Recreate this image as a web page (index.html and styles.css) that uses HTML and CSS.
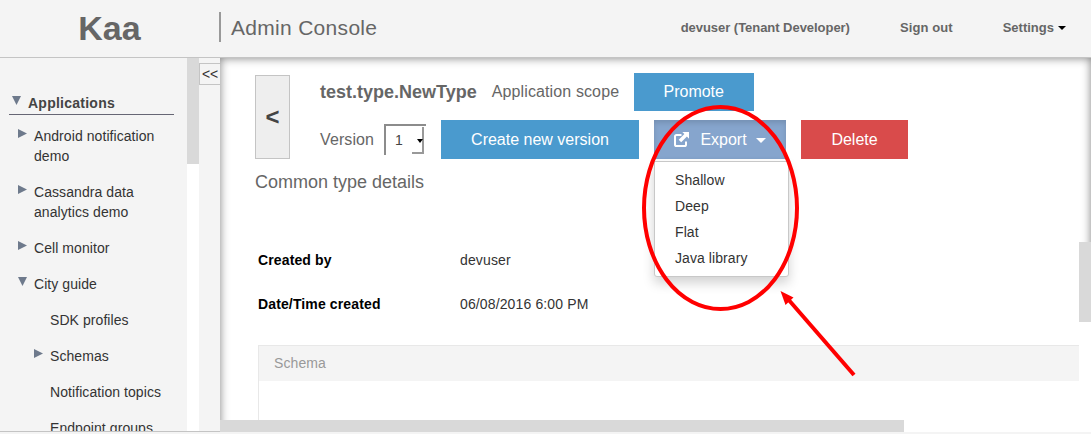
FILE: index.html
```html
<!DOCTYPE html>
<html lang="en">
<head>
<meta charset="utf-8">
<title>Kaa Admin Console</title>
<link rel="stylesheet" href="styles.css">
</head>
<body>
<header class="header">
  <div class="logo">Kaa</div>
  <div class="console-title">Admin Console</div>
  <nav class="user-nav">
    <span class="user">devuser (Tenant Developer)</span>
    <span class="sign-out">Sign out</span>
    <span class="settings">Settings<i class="caret"></i></span>
  </nav>
</header>
<div class="body">
  <aside class="sidebar">
    <div class="tree">
      <div class="tree-heading"><i class="arrow down"></i>Applications</div>
      <div class="item"><i class="arrow right"></i><span>Android notification demo</span></div>
      <div class="item"><i class="arrow right"></i><span>Cassandra data analytics demo</span></div>
      <div class="item"><i class="arrow right"></i><span>Cell monitor</span></div>
      <div class="item"><i class="arrow down"></i><span>City guide</span></div>
      <div class="item child"><i class="arrow"></i><span>SDK profiles</span></div>
      <div class="item child"><i class="arrow right"></i><span>Schemas</span></div>
      <div class="item child"><i class="arrow"></i><span>Notification topics</span></div>
      <div class="item child"><i class="arrow"></i><span>Endpoint groups</span></div>
    </div>
    <div class="side-scroll"><div class="side-thumb"></div></div>
    <div class="collapse-col"><div class="collapse">&lt;&lt;</div></div>
  </aside>
  <main class="main">
    <div class="content">
      <div class="top">
        <div class="back">&lt;</div>
        <div class="rows">
          <div class="row first">
            <span class="type-name">test.type.NewType</span>
            <span class="scope">Application scope</span>
            <span class="btn promote">Promote</span>
          </div>
          <div class="row">
            <span class="version">Version</span>
            <span class="select">1<span class="select-button"><i class="caret select-caret"></i></span></span>
            <span class="btn create">Create new version</span>
            <div class="export-wrap">
              <span class="btn export">
                <svg class="export-icon" width="15" height="15" viewBox="0 0 15 15"><path d="M7.5 3H2.6Q1 3 1 4.6V12.4Q1 14 2.6 14H10.4Q12 14 12 12.4V9.5" fill="none" stroke="#fff" stroke-width="2"/><path d="M8.3 0H15V6.7L12.9 4.6L7.2 10.3L4.7 7.8L10.4 2.1Z" fill="#fff"/></svg>
                <span>Export</span>
                <i class="caret export-caret"></i>
              </span>
              <div class="menu">
                <div>Shallow</div>
                <div>Deep</div>
                <div>Flat</div>
                <div>Java library</div>
              </div>
            </div>
            <span class="btn delete">Delete</span>
          </div>
        </div>
      </div>
      <div class="subtitle">Common type details</div>
      <div class="details">
        <b>Created by</b><span>devuser</span>
        <b>Date/Time created</b><span>06/08/2016 6:00 PM</span>
      </div>
      <div class="schema"><div class="schema-head">Schema</div></div>
    </div>
    <div class="v-scroll"><div class="v-thumb"></div></div>
    <div class="h-scroll"><div class="h-thumb"></div></div>
  </main>
</div>
<svg class="annotation" width="1091" height="434" viewBox="0 0 1091 434">
  <ellipse cx="720.5" cy="208" rx="76.5" ry="101" fill="none" stroke="#f00" stroke-width="4"/>
  <path d="M787.5 298.5L854 375" stroke="#f00" stroke-width="4"/>
  <path d="M780.5 291L793.5 297.5L785.5 305Z" fill="#f00"/>
</svg>
</body>
</html>
```
FILE: styles.css
```css
* { box-sizing: border-box; }
body {
  margin: 0;
  width: 1091px;
  height: 434px;
  overflow: hidden;
  background: #f4f4f4;
  color: #333;
  font: 14px/20px "Liberation Sans", Arial, sans-serif;
}
.header {
  display: flex;
  align-items: center;
  height: 58px;
  border-bottom: 1px solid #c4c4c4;
  color: #666;
}
.logo {
  width: 219px;
  text-align: center;
  font-size: 34px;
  font-weight: bold;
  line-height: 40px;
  padding-bottom: 2px;
}
.console-title {
  height: 30px;
  margin-top: -3px;
  padding-left: 10px;
  border-left: 2px solid #999;
  font-size: 21px;
  line-height: 32px;
  letter-spacing: 0.3px;
}
.user-nav {
  display: flex;
  gap: 50px;
  margin-left: auto;
  padding-right: 25px;
  font-size: 13px;
  font-weight: bold;
  padding-bottom: 2px;
}
.user { letter-spacing: -0.04px; }
.sign-out { letter-spacing: 0.1px; }
.settings { display: flex; align-items: center; }
.caret {
  border: 4px solid transparent;
  border-top-color: #000;
  border-bottom: 0;
}
.settings .caret { margin: 1px 0 0 4px; }
.body { display: flex; height: 374px; }
.sidebar {
  display: flex;
  width: 220px;
  height: 374px;
  border-bottom: 1px solid #c4c4c4;
}
.tree { width: 187px; padding: 35px 13px 0 9px; overflow: hidden; }
.tree-heading {
  display: flex;
  height: 22px;
  padding-left: 3px;
  border-bottom: 1px solid #666674;
  font-weight: bold;
  letter-spacing: 0.25px;
  color: #444;
}
.item { display: flex; padding: 8px 0 8px 9px; letter-spacing: 0.07px; }
.item:nth-child(2) { margin-top: 3px; }
.item.child { padding-left: 25px; }
.item.child span { white-space: nowrap; }
.arrow { flex: none; width: 9px; height: 9px; margin: 3px 7px 0 0; }
.arrow.right { background: #6e7a8c; clip-path: polygon(0 0, 100% 50%, 0 100%); }
.arrow.down { background: #6e7a8c; clip-path: polygon(0 0, 100% 0, 50% 100%); }
.side-scroll { width: 12px; background: #fff; }
.side-thumb { height: 106px; background: #d9d9d9; }
.collapse-col { width: 21px; padding-top: 5px; }
.collapse {
  height: 22px;
  border: 1px solid #c4c4c4;
  border-right: 0;
  padding-left: 2px;
  letter-spacing: -0.1px;
}
.main {
  display: grid;
  grid-template-columns: 859px 12px;
  grid-template-rows: 362px 12px;
  width: 871px;
  height: 374px;
  background: #fff;
  box-shadow: inset 0 0 10px rgba(0, 0, 0, 0.5);
}
.content { padding: 15px 0 0 35px; overflow: hidden; }
.top { display: flex; gap: 30px; }
.back {
  width: 35px;
  height: 84px;
  margin-top: 2px;
  border: 1px solid #c4c4c4;
  background: #eee;
  text-align: center;
  font-size: 24px;
  font-weight: bold;
  line-height: 82px;
  color: #444;
}
.rows { color: #666; font-size: 16px; }
.row { display: flex; align-items: center; height: 39px; gap: 15px; }
.row.first { height: 38px; margin-bottom: 9px; }
.type-name { font-size: 18px; font-weight: bold; }
.scope { width: 127px; letter-spacing: 0.12px; white-space: nowrap; }
.btn {
  display: flex;
  align-items: center;
  justify-content: center;
  height: 39px;
  color: #fff;
  background: #4a9ace;
}
.promote { width: 120px; height: 38px; }
.create { width: 198px; }
.delete { width: 107px; background: #d94b4b; }
.version { width: 54px; margin-right: -5px; letter-spacing: 0.1px; }
.select {
  display: flex;
  justify-content: space-between;
  width: 42px;
  height: 31px;
  padding: 1px 2px 1px 9px;
  border-top: 2px solid #8c8c8c;
  border-left: 2px solid #8c8c8c;
  font-size: 14px;
  line-height: 27px;
  color: #444;
}
.select-button {
  display: flex;
  align-items: center;
  justify-content: flex-end;
  width: 12px;
  border-right: 2px solid #999;
  border-bottom: 2px solid #999;
}
.select-caret { flex: none; margin: 2px -1px 0 0; border-width: 4px 3.5px 0; }
.export-wrap { position: relative; width: 132px; }
.export {
  background: #86a5cd;
  box-shadow: inset 0 3px 5px rgba(0, 0, 0, 0.125);
}
.export-icon { margin-right: 11px; }
.export-caret { margin: 2px 0 0 9px; border-width: 5px 5px 0; border-top-color: #fff; }
.menu {
  position: absolute;
  top: 41px;
  left: 0;
  width: 135px;
  height: 116px;
  padding: 5px 20px;
  border: 1px solid #c8c8c8;
  border-radius: 0 0 3px 3px;
  background: #fff;
  box-shadow: 0 6px 12px rgba(0, 0, 0, 0.18);
  color: #333;
  font-size: 14px;
  line-height: 26px;
  letter-spacing: 0.08px;
}
.subtitle { margin-top: 13px; font-size: 18px; color: #666; }
.details {
  display: grid;
  grid-template-columns: 202px 1fr;
  row-gap: 24px;
  margin: 58px 0 31px 3px;
  letter-spacing: 0.13px;
}
.details b { color: #000; }
.schema { height: 90px; margin-left: 3px; border: 1px solid #e8e8e8; border-width: 1px 0 0 1px; }
.schema-head { height: 35px; padding-left: 15px; background: #f4f4f4; color: #999; line-height: 34px; letter-spacing: 0.1px; }
.v-thumb { height: 80px; margin-top: 184px; background: #d9d9d9; }
.v-scroll { display: flex; flex-direction: column; }
.v-scroll::after { content: ""; flex: 1; background: #fff; }
.h-scroll { grid-column: 1 / 3; background: #fff; }
.h-thumb { width: 684px; height: 12px; background: #d9d9d9; }
.annotation { position: absolute; top: 0; left: 0; pointer-events: none; }
```
